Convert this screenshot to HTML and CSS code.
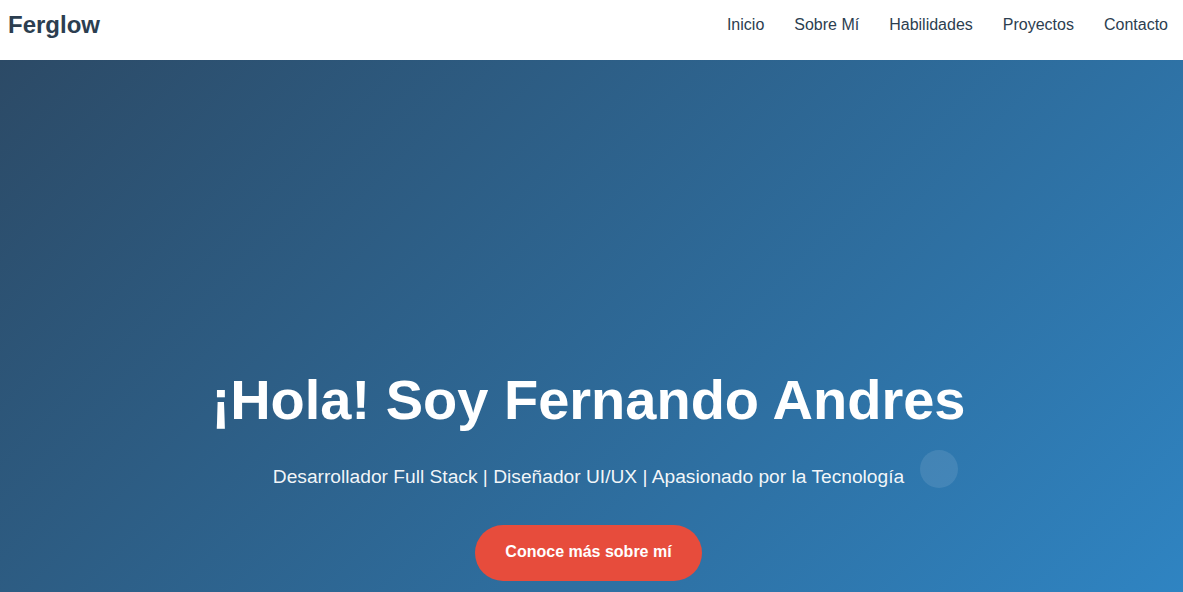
FILE: index.html
```html
<!DOCTYPE html>
<html lang="es">
<head>
<meta charset="utf-8">
<title>Ferglow</title>
<link rel="stylesheet" href="styles.css">
</head>
<body>
<header class="site-header">
  <nav class="navbar">
    <a class="logo" href="#">Ferglow</a>
    <ul class="nav-links">
      <li><a href="#">Inicio</a></li>
      <li><a href="#">Sobre Mí</a></li>
      <li><a href="#">Habilidades</a></li>
      <li><a href="#">Proyectos</a></li>
      <li><a href="#">Contacto</a></li>
    </ul>
  </nav>
</header>
<section class="hero">
  <span class="bubble"></span>
  <div class="hero-content">
    <h1 class="hero-title">¡Hola! Soy Fernando Andres</h1>
    <p class="hero-subtitle">Desarrollador Full Stack | Diseñador UI/UX | Apasionado por la Tecnología</p>
    <a class="btn" href="#">Conoce más sobre mí</a>
  </div>
</section>
</body>
</html>
```
FILE: styles.css
```css
* { box-sizing: border-box; }
html, body { margin: 0; padding: 0; }
body {
  font-family: "Liberation Sans", Arial, sans-serif;
  color: #2c3e50;
  overflow: hidden;
}
.site-header {
  height: 60px;
  background: #fff;
}
.navbar {
  height: 50px;
  display: flex;
  align-items: center;
  justify-content: space-between;
  padding: 0 15px 0 8px;
}
.logo {
  font-size: 24px;
  font-weight: 700;
  color: #2c3e50;
  text-decoration: none;
}
.nav-links {
  list-style: none;
  display: flex;
  gap: 30px;
  margin: 0;
  padding: 0;
}
.nav-links a {
  font-size: 16px;
  color: #2c3e50;
  text-decoration: none;
}
.hero {
  position: relative;
  height: 532px;
  background: linear-gradient(135deg, #2c4a66 0%, #2f84c2 100%);
  color: #fff;
  overflow: hidden;
}
.hero-content {
  display: flex;
  flex-direction: column;
  align-items: center;
  text-align: center;
  padding: 306px 6px 0 0;
}
.hero-title {
  font-size: 56px;
  font-weight: 700;
  line-height: 1.2;
  margin: 0 0 33px;
}
.hero-subtitle {
  font-size: 19.2px;
  line-height: 22px;
  margin: 0 0 37px;
  color: rgba(255,255,255,0.95);
}
.btn {
  display: inline-block;
  background: #e74c3c;
  color: #fff;
  font-size: 16px;
  font-weight: 700;
  line-height: 18px;
  padding: 18px 30px 20px;
  border-radius: 50px;
  text-decoration: none;
}
.bubble {
  position: absolute;
  left: 920px;
  top: 390px;
  width: 38px;
  height: 38px;
  border-radius: 50%;
  background: rgba(255,255,255,0.1);
}
```
